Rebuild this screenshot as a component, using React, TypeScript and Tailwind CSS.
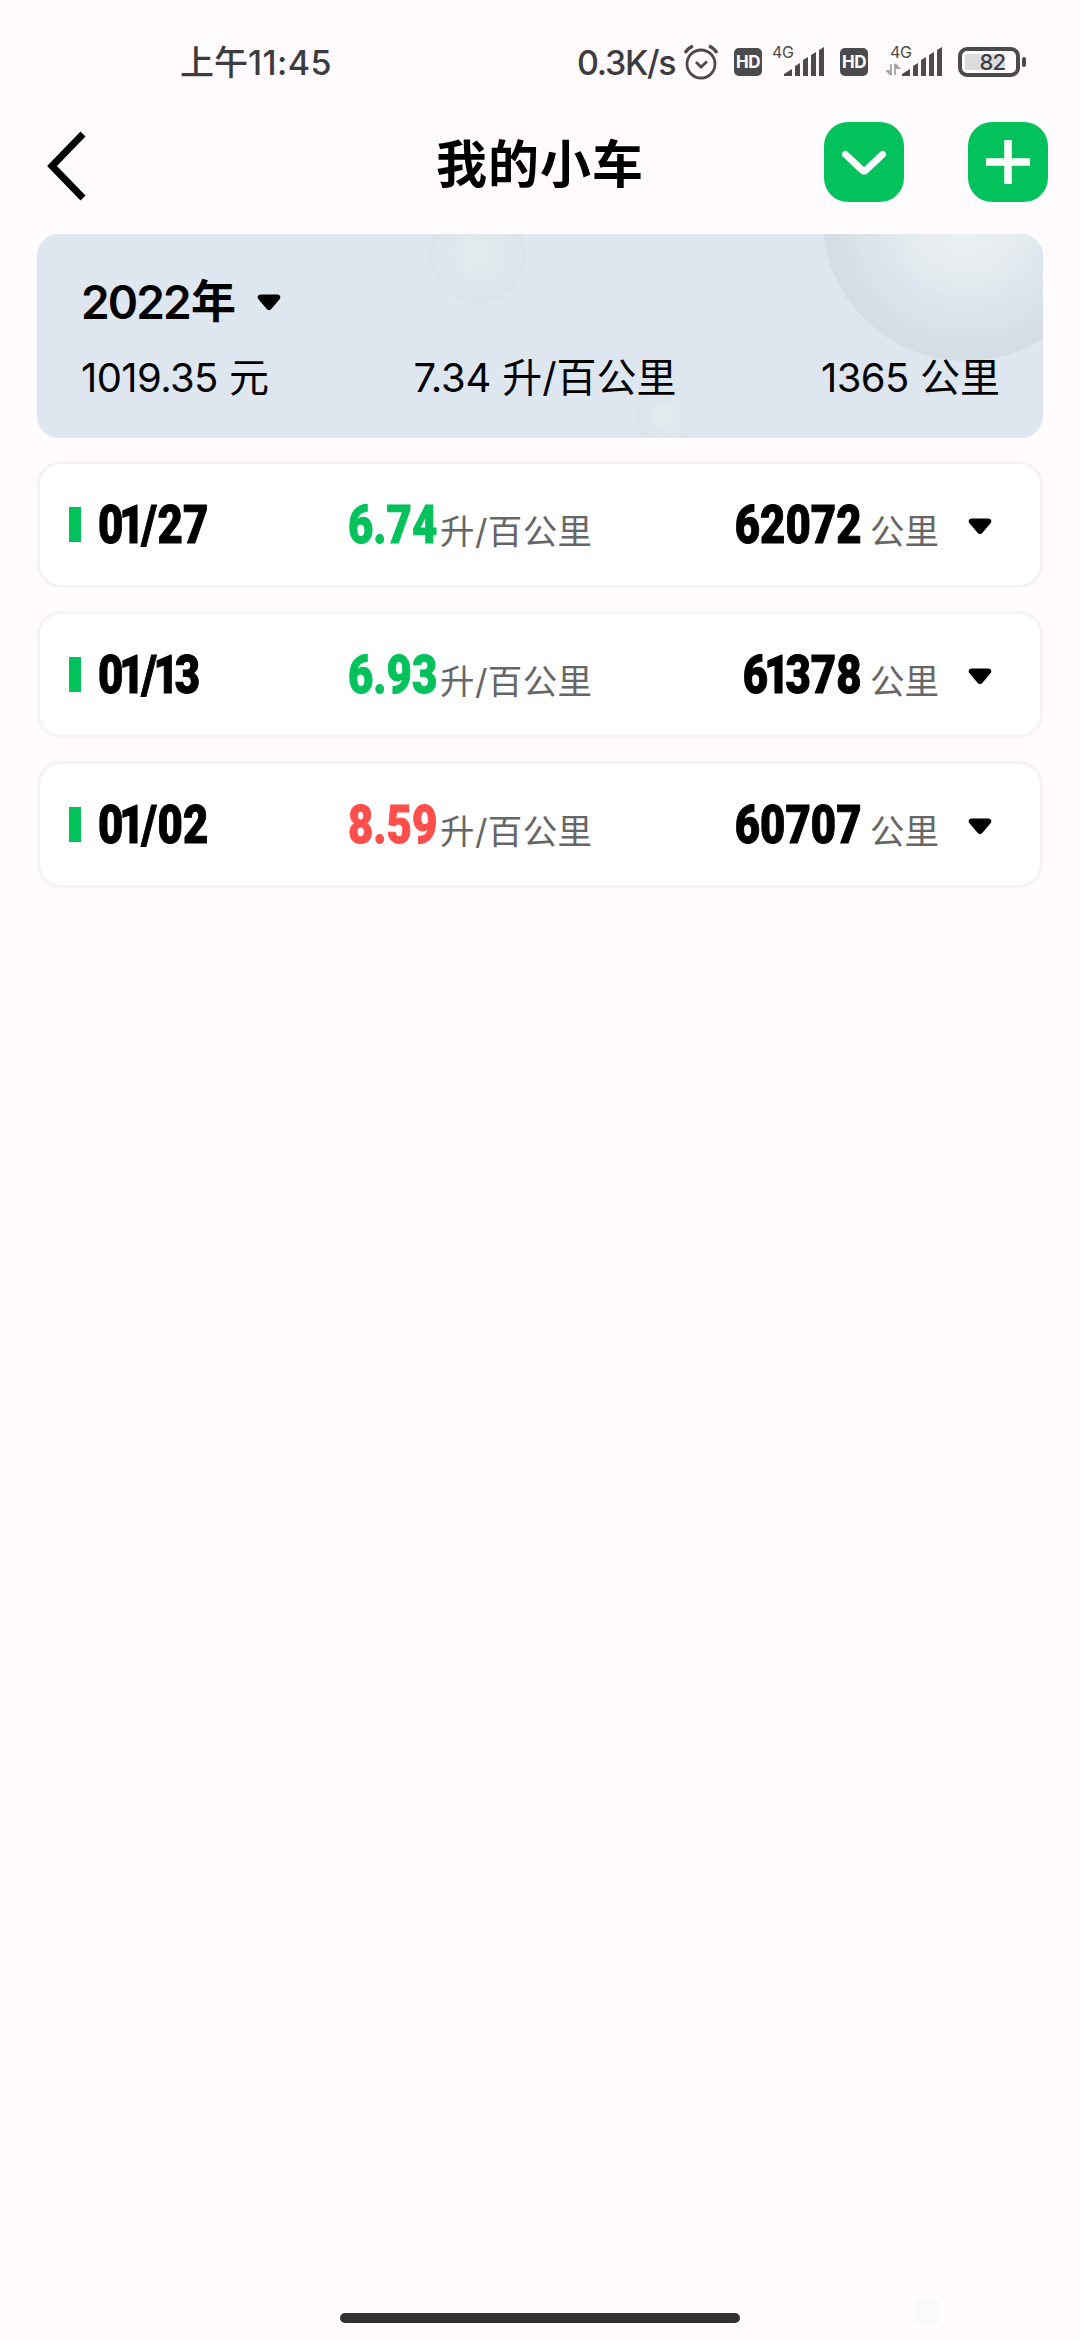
import React, { useState } from "react";

const styles = {
  cjk: "font-[Inter,'Noto_Sans_CJK_SC',sans-serif]",
  digits:
    "inline-block font-[Roboto,sans-serif] font-black text-[54px] leading-[54px] scale-x-[0.81] whitespace-nowrap [-webkit-text-stroke:1px_currentColor]",
};

const records = [
  { date: "01/27", usage: "6.74", mileage: "62072", high: false },
  { date: "01/13", usage: "6.93", mileage: "61378", high: false },
  { date: "01/02", usage: "8.59", mileage: "60707", high: true },
];

function Caret() {
  return (
    <svg width="24" height="17" viewBox="0 0 24 17">
      <path d="M4 .5h16c3 0 4.300 2.500 2.500 4.700l-8 9.600c-1.500 1.800-3.500 1.800-5 0l-8-9.600C-.3 3 1 .5 4 .5z" />
    </svg>
  );
}

// the digit 1 is set tighter than the others
function Digits({ text }: { text: string }) {
  return (
    <>
      {text.split("").map((c, i) => (
        <span key={i} className={c === "1" ? "-ml-[5px] -mr-[5px]" : c === "/" ? "mx-[1px]" : ""}>
          {c}
        </span>
      ))}
    </>
  );
}

function Hd() {
  return (
    <div className="w-7 h-7 rounded-[5px] bg-[#4b4b4d] text-white flex items-center justify-center font-[Inter,sans-serif] font-bold text-[17px] leading-none tracking-[-0.5px]">
      HD
    </div>
  );
}

function Signal({ data }: { data?: boolean }) {
  return (
    <svg width="58" height="42" viewBox="0 -8 58 42" fill="#4b4b4d">
      <text x="4" y="14" fontFamily="Inter" fontSize="16" letterSpacing="-0.3">
        4G
      </text>
      {data && (
        <path d="M5 20v11M5 31l-4-4h4M9 31V20M9 20l4 4H9" stroke="#a5a5a7" strokeWidth="1.800" fill="#a5a5a7" />
      )}
      <path d="M16 32v-2l8-5v7zM27 32V22l5-3v13zM35 32V16l5-3v19zM43 32V11l5-3v24zM51 32V6l5-3v29z" />
    </svg>
  );
}

function StatusBar() {
  return (
    <div className="h-[110px] pt-[42px] flex items-start text-[#3c3c3e]">
      <div className={`${styles.cjk} ml-[180px] w-[397px] text-[34px] leading-[42px] font-medium whitespace-nowrap`}>
        上午<span className="text-[34px] tracking-[0.4px]">11:45</span>
      </div>
      <div className="font-[Inter,sans-serif] w-[107px] text-[34px] leading-[42px] font-medium tracking-[-1.3px] whitespace-nowrap">0.3K/s</div>
      <svg className="mt-[2px]" width="36" height="36" viewBox="0 0 36 36" fill="none" stroke="#4b4b4d" strokeWidth="2.800">
        <circle cx="17" cy="20" r="14" />
        <path d="M12 18l5 5 6-5.500" />
        <path d="M1 9q3-5 8-7M33 9q-3-5-8-7" strokeWidth="3.200" />
      </svg>
      <div className="mt-[6px] ml-[14px] flex">
        <Hd />
        <div className="-mt-[12px] ml-[6px]">
          <Signal />
        </div>
        <div className="ml-[14px]">
          <Hd />
        </div>
        <div className="-mt-[12px] ml-[18px]">
          <Signal data />
        </div>
      </div>
      <div className="ml-[14px] mt-[5px] flex items-center">
        <div className="w-[62px] h-[30px] rounded-[9px] border-4 border-[#4b4b4d] p-[3px]">
          <div className="h-4 w-10 rounded-[2px] bg-[#dcdbdd] flex items-center justify-end font-[Inter,sans-serif] text-[22px] font-medium leading-none tracking-[-1px]">
            <span>82</span>
          </div>
        </div>
        <div className="w-1 h-[10px] ml-[2px] rounded-sm bg-[#4b4b4d]" />
      </div>
    </div>
  );
}

function Header() {
  return (
    <header className="h-[124px] pt-3 pr-8 flex items-start">
      <svg className="ml-[46px] mt-[9px] cursor-pointer" width="42" height="70" viewBox="0 0 42 70" fill="none" stroke="#000" strokeWidth="7">
        <path d="M37 3L6 35l31 32" />
      </svg>
      <h1 className={`${styles.cjk} ml-[348px] mt-[15px] w-[388px] text-[51px] leading-[56px] font-semibold tracking-[1px]`}>我的小车</h1>
      <button className="w-20 h-20 rounded-[24px] bg-[#03c25b] flex items-center justify-center">
        <svg width="80" height="80" viewBox="0 0 80 80" fill="none" stroke="#fff" strokeWidth="7" strokeLinecap="round" strokeLinejoin="round">
          <path d="M21.500 32.500L38 48q2 2 4 0l16.500-15.500" />
        </svg>
      </button>
      <button className="ml-16 w-20 h-20 rounded-[24px] bg-[#03c25b]">
        <svg width="80" height="80" viewBox="0 0 80 80" stroke="#fff" strokeWidth="7.500">
          <path d="M18 40h44M40 18v44" />
        </svg>
      </button>
    </header>
  );
}

function Summary() {
  return (
    <section className={`${styles.cjk} relative overflow-hidden mx-[37px] h-[204px] rounded-[22px] bg-[#dee6ef] text-black`}>
      <svg className="absolute inset-0" width="1006" height="204" viewBox="0 0 1006 204">
        <defs>
          <radialGradient id="big">
            <stop offset="0" stopColor="#edf1f4" />
            <stop offset=".28" stopColor="#e8edf1" />
            <stop offset=".48" stopColor="#e3eaee" />
            <stop offset=".58" stopColor="#dfe5ee" />
            <stop offset=".74" stopColor="#dbe4e9" />
            <stop offset=".8" stopColor="#d7e1e6" />
            <stop offset="1" stopColor="#d5dde4" />
          </radialGradient>
          <radialGradient id="small">
            <stop offset="0" stopColor="#e5ecef" />
            <stop offset=".38" stopColor="#e2e9ed" />
            <stop offset=".5" stopColor="#dfe6ee" />
            <stop offset=".88" stopColor="#dde5ed" />
            <stop offset="1" stopColor="#dae4e7" />
          </radialGradient>
        </defs>
        <circle cx="929" cy="-17" r="144" fill="url(#big)" />
        <circle cx="441" cy="21" r="48" fill="url(#small)" />
        <circle cx="629" cy="181" r="30" fill="url(#small)" />
      </svg>
      <div className="relative pl-[44px] pr-[43px] pt-[40px]">
        <div className="flex items-center h-[56px] text-[45px] font-semibold">
          <span className="w-[110px] text-[46px] tracking-[-1.900px]">2022</span>
          <span className="w-[66px]">年</span>
          <Caret />
        </div>
        <div className="flex justify-between mt-[20px] h-[56px] leading-[56px] text-[40px] whitespace-nowrap">
          <span>
            <span className="tracking-[-0.6px]">1019.35</span> 元
          </span>
          <span>
            <span className="tracking-[-0.3px]">7.34</span> 升/百公里
          </span>
          <span>
            <span className="tracking-[-0.6px]">1365</span> 公里
          </span>
        </div>
      </div>
    </section>
  );
}

function RecordRow({ date, usage, mileage, high }: (typeof records)[number]) {
  return (
    <li className="h-[127px] rounded-[24px] border-[3px] border-[#f5f3f6] bg-white flex items-center pl-[29px] cursor-pointer">
      <span className="w-[12px] h-[35px] bg-[#03c25b]" />
      <div className="w-[267px] pl-[17px] pt-[1px]">
        <span className={`${styles.digits} origin-left`}>
          <Digits text={date} />
        </span>
      </div>
      <div className="w-[92px] pt-[1px]">
        <span className={high ? `${styles.digits} origin-left text-[#ff4f4c]` : `${styles.digits} origin-left text-[#03c25b]`}>
          <Digits text={usage} />
        </span>
      </div>
      <span className={`${styles.cjk} w-[198px] mt-[14px] text-[34.500px] leading-[44px] tracking-[0.4px] text-[#666] whitespace-nowrap`}>
        升/百公里
      </span>
      <div className="w-[224px] pt-[1px] flex justify-end">
        <span className={`${styles.digits} origin-right`}>
          <Digits text={mileage} />
        </span>
      </div>
      <span className={`${styles.cjk} w-[106px] pl-[8px] mt-[14px] text-[34.500px] leading-[44px] text-[#666]`}>公里</span>
      <div className="pt-[3px]">
        <Caret />
      </div>
    </li>
  );
}

function App() {
  const [list] = useState(records);

  return (
    <div className="w-[1080px] h-[2340px] overflow-hidden bg-[#fffbff] flex flex-col">
      <StatusBar />
      <Header />
      <Summary />
      <ul className="mx-[37px] mt-[23px] flex flex-col gap-[23px]">
        {list.map((r) => (
          <RecordRow key={r.date} {...r} />
        ))}
      </ul>
      {/* home indicator */}
      <div className="relative mt-auto mb-[17px] mx-auto w-[400px] h-[10px] rounded-full bg-[#313133]">
        <div className="absolute left-[572px] -top-[17px] w-[30px] h-[31px] rounded-[6px] border-2 border-white bg-[#fcf9fd]" />
      </div>
    </div>
  );
}

export default App;
